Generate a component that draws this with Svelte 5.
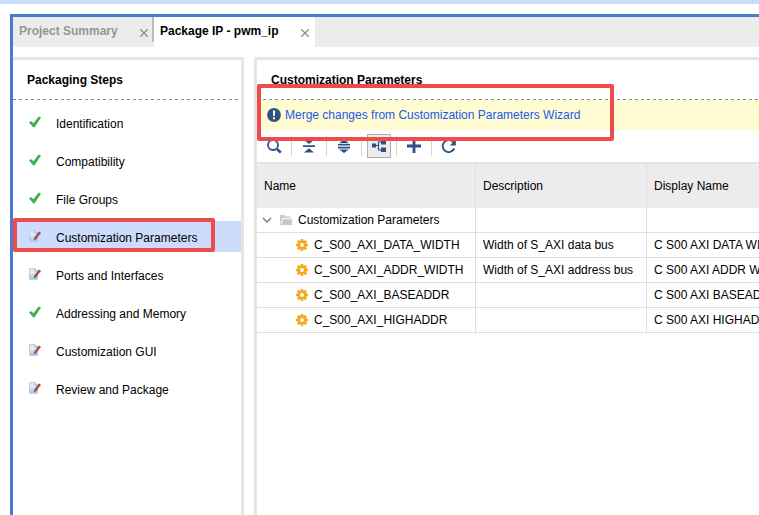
<script>
  const steps = [
    { label: 'Identification', done: true },
    { label: 'Compatibility', done: true },
    { label: 'File Groups', done: true },
    { label: 'Customization Parameters', done: false },
    { label: 'Ports and Interfaces', done: false },
    { label: 'Addressing and Memory', done: true },
    { label: 'Customization GUI', done: false },
    { label: 'Review and Package', done: false }
  ];
  let selected = $state('Customization Parameters');
  let open = $state(true);

  const params = [
    { name: 'C_S00_AXI_DATA_WIDTH', desc: 'Width of S_AXI data bus', display: 'C S00 AXI DATA WIDTH' },
    { name: 'C_S00_AXI_ADDR_WIDTH', desc: 'Width of S_AXI address bus', display: 'C S00 AXI ADDR WIDTH' },
    { name: 'C_S00_AXI_BASEADDR', desc: '', display: 'C S00 AXI BASEADDR' },
    { name: 'C_S00_AXI_HIGHADDR', desc: '', display: 'C S00 AXI HIGHADDR' }
  ];
</script>

{#snippet cross()}
  <svg width="8" height="8" viewBox="0 0 8 8"><path d="M.3.3l7.4 7.4M7.7.3L.3 7.700" stroke="#8c8c8c" stroke-width="1.300" fill="none" /></svg>
{/snippet}

<div class="page">
  <div class="strip"></div>
  <div class="frame">
    <div class="tabs">
      <div class="tab">
        <button class="title">Project Summary</button>
        <button class="close" aria-label="Close Project Summary">{@render cross()}</button>
      </div>
      <div class="tab active">
        <button class="title">Package IP - pwm_ip</button>
        <button class="close" aria-label="Close Package IP">{@render cross()}</button>
      </div>
    </div>

    <div class="panels">
      <nav class="side">
        <h2>Packaging Steps</h2>
        <ul>
          {#each steps as step}
            <li>
              <button class="step" class:selected={selected === step.label} onclick={() => (selected = step.label)}>
                {#if step.done}
                  <svg width="12" height="12" viewBox="0 0 12 12"><path d="M0 6.400L2 4.900l2.400 2.400L9.800.4l2.200 1.200L5.600 11.300H4.200z" fill="#3db14a" /></svg>
                {:else}
                  <svg width="12" height="12" viewBox="0 0 12 12">
                    <path d="M.5.5h5.500L8.500 3v8.500h-8z" fill="#dbe8f5" stroke="#c0d0e3" />
                    <path d="M1 6.500h7.500v4.500H1z" fill="#a6c7e6" />
                    <path d="M6 .5V3h2.500" fill="#fff" stroke="#8fb0d4" />
                    <path d="M1.500 5h3.500M1.500 8h3" stroke="#eff6fd" />
                    <path d="M10.600 2.600L6.400 8.200" stroke="#b8473c" stroke-width="2.500" />
                    <path d="M5.500 7.600l1.900 1.400-2.600 1.200z" fill="#5b5552" />
                    <path d="M9.600 2l2 1.500" stroke="#80605c" stroke-width="1.300" />
                  </svg>
                {/if}
                <span>{step.label}</span>
              </button>
              {#if step.label === 'Customization Parameters'}<div class="mark mark-step"></div>{/if}
            </li>
          {/each}
        </ul>
      </nav>

      <main>
        <h2>Customization Parameters</h2>
        <div class="notice">
          <svg width="14" height="14" viewBox="0 0 14 14"><circle cx="7" cy="7" r="6.900" fill="#2f4f86" /><path d="M5.900 2.500h2.200L7.900 8H6.100zM6 9.200h2v2H6z" fill="#fffcd9" /></svg>
          <a href="#merge">Merge changes from Customization Parameters Wizard</a>
          <div class="mark mark-notice"></div>
        </div>
        <div class="toolbar">
          <button aria-label="Search"><svg width="16" height="16" viewBox="0 0 16 16"><circle cx="7" cy="7" r="5" fill="none" stroke="#2f4f86" stroke-width="1.800" /><path d="M11 11l3.800 3.600" stroke="#2f4f86" stroke-width="2.600" /></svg></button>
          <button aria-label="Collapse all"><svg width="16" height="16" viewBox="0 0 16 16" fill="#2f4f86"><path d="M3 2h10L8 6zM2 7.200h12v1.800H2zM3 14.500h10L8 10.300z" /></svg></button>
          <button aria-label="Expand all"><svg width="16" height="16" viewBox="0 0 16 16" fill="#2f4f86"><path d="M3 5.200h10L8 1.200zM2 6h12v1.600H2zM2 8.800h12v1.600H2zM3.200 11.400h9.600L8 14.900z" /></svg></button>
          <button aria-label="Tree view" class="pressed"><span><svg width="16" height="16" viewBox="0 0 16 16"><path d="M1 5.500h4v4H1zM10 2h5v4.500h-5zM10 9.500h5V14h-5z" fill="#2f4f86" /><path d="M5 7.500h2.500M10 4H7.500v8H10" fill="none" stroke="#2f4f86" stroke-width="1.200" /></svg></span></button>
          <button aria-label="Add"><svg width="16" height="16" viewBox="0 0 16 16"><path d="M8 1v14M1 8h14" stroke="#2f4f86" stroke-width="2.800" /></svg></button>
          <button aria-label="Refresh"><svg width="16" height="16" viewBox="0 0 16 16"><path d="M13.200 10.500A6 6 0 1 1 12.600 4.600" fill="none" stroke="#2f4f86" stroke-width="1.900" /><path d="M14.800 1.500V7.500H8.800z" fill="#2f4f86" /></svg></button>
        </div>
        <div class="grid">
          <table>
            <colgroup><col class="c-name" /><col class="c-desc" /><col class="c-disp" /></colgroup>
            <thead>
              <tr><th>Name</th><th>Description</th><th>Display Name</th></tr>
            </thead>
            <tbody>
              <tr>
                <td>
                  <button class="group" aria-expanded={open} onclick={() => (open = !open)}>
                    <svg class="chev" class:shut={!open} width="10" height="10" viewBox="0 0 10 10"><path d="M1 3l4 4 4-4" fill="none" stroke="#777" stroke-width="1.400" /></svg>
                    <svg width="12" height="10" viewBox="0 0 12 10"><path d="M0 0h4.500l1.200 1.500H10.500V3.300H2.500L1 7.500V10H0z" fill="#cdcdcd" /><path d="M3 4.200h9V10H1.300z" fill="#c6c6c6" /></svg>
                    <span>Customization Parameters</span>
                  </button>
                </td>
                <td></td>
                <td></td>
              </tr>
              {#if open}
                {#each params as p}
                  <tr>
                    <td>
                      <div class="param">
                        <svg width="12" height="12" viewBox="-6 -6 12 12" fill="#f8a81d">
                          {#each [0, 45, 90, 135] as a}
                            <rect x="-1.300" y="-6" width="2.600" height="12" transform="rotate({a})" />
                          {/each}
                          <circle r="4.400" />
                          <circle r="2" fill="#fff" />
                        </svg>
                        <span>{p.name}</span>
                      </div>
                    </td>
                    <td>{p.desc}</td>
                    <td>{p.display}</td>
                  </tr>
                {/each}
              {/if}
            </tbody>
          </table>
        </div>
      </main>
    </div>
  </div>
</div>

<style>
  :global(body) { margin: 0; background: #fff; }
  .page {
    display: flex;
    flex-direction: column;
    min-height: 100vh;
    overflow: hidden;
    font: 12px/16px "Liberation Sans", Arial, sans-serif;
    color: #000;
  }
  button {
    font: inherit;
    color: inherit;
    border: 0;
    padding: 0;
    background: none;
    text-align: left;
    cursor: pointer;
  }
  svg { display: block; flex: none; }
  .strip { height: 4px; background: #ccdcfd; }
  .frame {
    flex: 1;
    display: flex;
    flex-direction: column;
    margin: 10px 0 0 10px;
    border: solid #4a7bd0;
    border-width: 3px 0 0 3px;
  }
  .tabs { display: flex; height: 30px; background: #ececec; }
  .tab {
    display: flex;
    align-items: flex-start;
    justify-content: space-between;
    box-sizing: border-box;
    width: 141px;
    padding: 6px 6px 0;
    color: #959595;
    background: linear-gradient(#bcbcbc, #bcbcbc) right top / 2px 25px no-repeat;
  }
  .tab.active { width: 161px; color: #000; background: #fff; }
  .title { font-weight: bold; white-space: nowrap; }
  .close { padding-top: 6px; }
  .panels { flex: 1; display: flex; gap: 10px; margin-top: 10px; }
  .side {
    flex: none;
    width: 228px;
    border: solid #e6e6e6;
    border-width: 3px 3px 0 0;
  }
  main {
    flex: 1;
    min-width: 0;
    border: solid #e6e6e6;
    border-width: 3px 0 0 3px;
  }
  h2 {
    margin: 0;
    padding: 12px 14px;
    font-size: 12px;
    line-height: 16px;
    background: repeating-linear-gradient(90deg, #8c8c8c 0 3px, transparent 3px 6px) left bottom / 100% 1px no-repeat;
  }
  ul {
    list-style: none;
    margin: 0;
    padding: 7px 0 0;
    display: flex;
    flex-direction: column;
    gap: 7px;
  }
  li { position: relative; }
  .step {
    display: flex;
    gap: 15px;
    width: 100%;
    height: 31px;
    padding: 9px 0 0 16px;
  }
  .step span { line-height: 16px; }
  .selected { background: #ccdcfd; }
  .mark {
    position: absolute;
    box-sizing: border-box;
    border: 4px solid #ee4b4b;
    border-radius: 2px;
    pointer-events: none;
  }
  .mark-step { left: 0; top: -3px; width: 202px; height: 34px; }
  .mark-notice { left: 0; top: -16px; width: 357px; height: 57px; }
  .notice {
    position: relative;
    display: flex;
    align-items: center;
    gap: 4px;
    height: 30px;
    padding-left: 10px;
    background: #fffcd2;
  }
  .notice a { color: #1a58f0; text-decoration: none; white-space: nowrap; }
  .toolbar { display: flex; height: 32px; align-items: center; }
  .toolbar button {
    display: flex;
    align-items: center;
    justify-content: center;
    box-sizing: border-box;
    width: 35px;
    height: 20px;
    border-right: 1px solid #d4d4d4;
  }
  .toolbar button:last-child { border-color: transparent; }
  .pressed span {
    flex: none;
    padding: 3px;
    border: 1px solid #b0b0b0;
    background: #ececec;
  }
  .grid { overflow: hidden; border-top: 2px solid #e4e4e4; }
  table { width: 100%; table-layout: fixed; border-collapse: separate; border-spacing: 0; }
  .c-name { width: 219px; }
  .c-desc { width: 171px; }
  th, td {
    box-sizing: border-box;
    padding: 0 0 0 7px;
    border-right: 1px solid #dedede;
    font-weight: normal;
    text-align: left;
    white-space: nowrap;
    overflow: hidden;
  }
  th:last-child, td:last-child { border-right: 0; }
  th { height: 44px; background: #ececec; }
  td { height: 25px; border-bottom: 1px solid #dedede; }
  .group, .param { display: flex; align-items: center; }
  .group svg + svg { margin: 0 6px 0 8px; }
  .group { margin-left: -2px; }
  .shut { transform: rotate(-90deg); }
  .param { gap: 6px; padding-left: 32px; }
</style>
